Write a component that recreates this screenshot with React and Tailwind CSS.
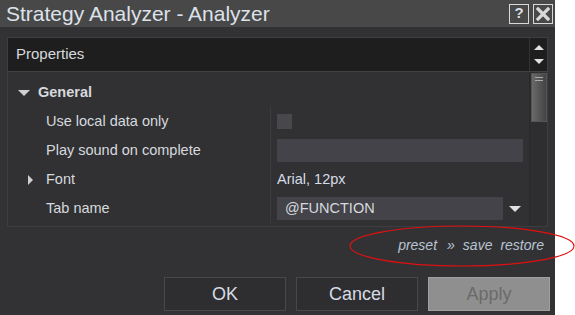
import React from 'react';

function Row({ label, caret, children }) {
  return (
    <div className="flex h-[29px] items-center">
      <div className="flex w-[262px] items-center">
        <div className="w-[38px] flex justify-center pl-[6px]">
          {caret && <span className="block h-0 w-0 border-y-[5px] border-l-[5px] border-y-transparent border-l-[#d0d0d0]" />}
        </div>
        <span className="text-[14.5px] text-[#d6d9de]">{label}</span>
      </div>
      <div className="flex-1 h-full flex items-center border-l border-[#3c3c3e] pl-[6px]">{children}</div>
    </div>
  );
}

export default function App() {
  return (
    <div className="relative flex h-[315px] w-[575px] bg-white" style={{ fontFamily: '"Liberation Sans", Arial, sans-serif' }}>
      <div className="flex w-[555px] flex-col bg-[#323234]">
        {/* title bar */}
        <div className="flex h-[27px] items-center justify-between bg-[#484848] pl-[6px] pr-[2px]">
          <span className="text-[21px] text-[#dde2ea]">Strategy Analyzer - Analyzer</span>
          <div className="flex gap-[4px]">
            <div className="flex h-[20px] w-[20px] items-center justify-center border border-[#d8d8d8] text-[15px] font-bold text-[#d8dde4]">?</div>
            <div className="flex h-[20px] w-[20px] items-center justify-center border border-[#d8d8d8]">
              <svg width="14" height="14" viewBox="0 0 14 14">
                <path d="M2 2 L12 12 M12 2 L2 12" stroke="#d8d8d8" strokeWidth="3.2" strokeLinecap="square" />
              </svg>
            </div>
          </div>
        </div>

        {/* properties panel */}
        <div className="mx-[7px] mt-[10px] flex flex-col border border-[#3e3e40]">
          <div className="flex h-[33px] items-center bg-[#1e1e1e]">
            <span className="flex-1 pl-[8px] text-[15px] text-[#d6d9de]">Properties</span>
            <div className="flex h-full w-[18px] flex-col items-center justify-center gap-[9px] border-l border-[#333]">
              <span className="block h-0 w-0 border-x-[5px] border-b-[5px] border-x-transparent border-b-[#e0e0e0]" />
              <span className="block h-0 w-0 border-x-[5px] border-t-[5px] border-x-transparent border-t-[#e0e0e0]" />
            </div>
          </div>
          <div className="flex h-[155px] border-t border-[#414143] bg-[#313133]">
            <div className="flex-1 flex flex-col pt-[6px]">
              <div className="flex h-[29px] items-center">
                <div className="w-[30px] flex justify-center pl-[2px]">
                  <span className="block h-0 w-0 border-x-[6px] border-t-[6px] border-x-transparent border-t-[#d0d0d0]" />
                </div>
                <span className="text-[14.5px] font-bold text-[#d6d9de]">General</span>
              </div>
              <Row label="Use local data only">
                <div className="h-[15px] w-[15px] bg-[#48484c]" />
              </Row>
              <Row label="Play sound on complete">
                <div className="h-[23px] w-[246px] bg-[#434349]" />
              </Row>
              <Row label="Font" caret>
                <span className="text-[14.5px] text-[#d6dce6]">Arial, 12px</span>
              </Row>
              <Row label="Tab name">
                <div className="flex h-[23px] w-[226px] items-center bg-[#434349] pl-[8px] text-[14.5px] text-[#d6d9de]">@FUNCTION</div>
                <span className="ml-[6px] block h-0 w-0 border-x-[6px] border-t-[6px] border-x-transparent border-t-[#e0e0e0]" />
              </Row>
            </div>
            <div className="w-[18px] border-l border-[#2a2a2a] bg-[#2e2e30] flex justify-center">
              <div className="mt-[1px] h-[49px] w-[16px] border border-[#555] bg-gradient-to-r from-[#6a6a6a] to-[#444] flex flex-col items-center gap-[2px] pt-[3px]">
                <div className="h-[1px] w-[8px] bg-[#aaa]" />
                <div className="h-[1px] w-[8px] bg-[#aaa]" />
              </div>
            </div>
          </div>
        </div>

        {/* preset links */}
        <div className="flex h-[37px] items-center justify-end pr-[11px] gap-[10px] text-[14px] italic text-[#b8c4d2]">
          <span>preset</span>
          <span>»</span>
          <span className="-ml-[2px]">save</span>
          <span className="-ml-[2px]">restore</span>
        </div>

        {/* buttons */}
        <div className="mt-[13px] flex justify-end gap-[10px] pr-[5px]">
          <button className="h-[34px] w-[122px] border border-[#48484a] bg-[#2e2e30] text-[18px] text-[#d6dce6]">OK</button>
          <button className="h-[34px] w-[122px] border border-[#48484a] bg-[#2e2e30] text-[18px] text-[#d6dce6]">Cancel</button>
          <button className="h-[34px] w-[122px] border border-[#a0a0a0] bg-[#8f8f8f] text-[18px] text-[#6a6a6a]">Apply</button>
        </div>
      </div>

      {/* red annotation ellipse */}
      <svg className="absolute left-[348px] top-[224px]" width="227" height="44" viewBox="0 0 227 44">
        <ellipse cx="114" cy="22" rx="112" ry="20" fill="none" stroke="#e01010" strokeWidth="1.2" />
      </svg>
    </div>
  );
}
